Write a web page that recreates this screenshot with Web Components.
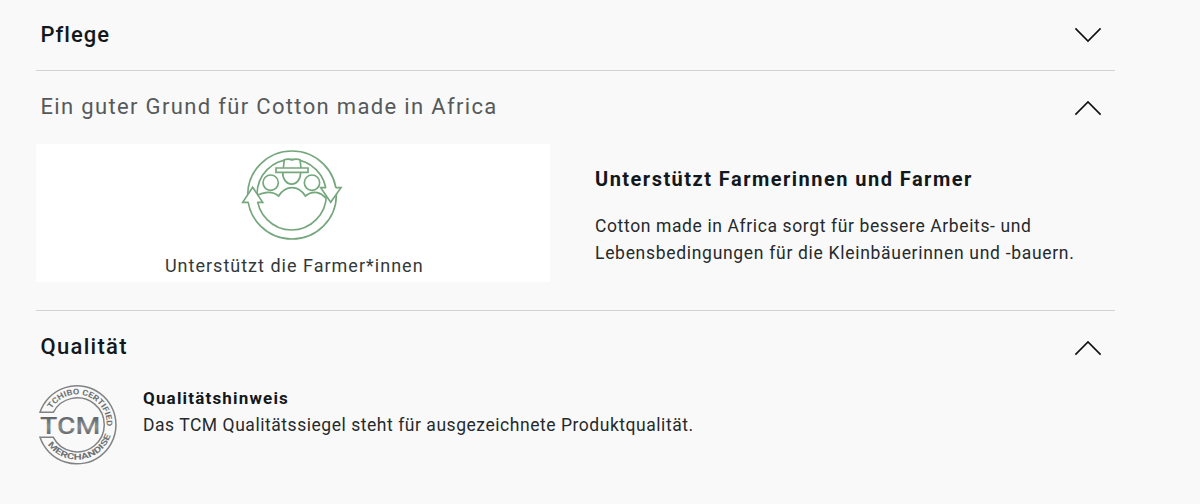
<!DOCTYPE html>
<html lang="de">
<head>
<meta charset="utf-8">
<title>Produktdetails</title>
<style>
body{margin:0;background:#f9f9f9;color:#12181b;font-family:Roboto,"Liberation Sans",sans-serif;font-variant-ligatures:none}
</style>
</head>
<body>
<product-accordion>
  <accordion-item label="Pflege" style="--h:70px;--top:20.5px;--icon:6px;--ls:1px"></accordion-item>
  <accordion-item label="Ein guter Grund für Cotton made in Africa" open style="--h:239px;--top:22px;--c:#56595b;--w:400;--ls:1.34px">
    <benefit-row>
      <farmer-card slot="media">Unterstützt die Farmer*innen</farmer-card>
      <span slot="heading">Unterstützt Farmerinnen und Farmer</span>
      <div>Cotton made in Africa sorgt für bessere Arbeits- und</div>
      <div style="letter-spacing:.7px">Lebensbedingungen für die Kleinbäuerinnen und -bauern.</div>
    </benefit-row>
  </accordion-item>
  <accordion-item label="Qualität" open last style="--h:193px;--top:22px;--ls:1.3px">
    <quality-note><span slot="heading">Qualitätshinweis</span>Das TCM Qualitätssiegel steht für ausgezeichnete Produktqualität.</quality-note>
  </accordion-item>
</product-accordion>
<script>
const define=(name,html,setup)=>customElements.define(name,class extends HTMLElement{
  constructor(){super();this.attachShadow({mode:'open'}).innerHTML=html}
  connectedCallback(){if(setup)setup(this,this.shadowRoot)}
});

define('product-accordion',`<style>:host{display:block;width:1079px;margin-left:36px}</style><slot></slot>`);

define('chevron-icon',`<style>:host{display:block;width:28px;height:16px}:host([up]) svg{transform:scaleY(-1)}svg{display:block}</style>
<svg width="28" height="16" viewBox="0 0 28 16" fill="none" stroke="#111" stroke-width="1.6"><path d="M1.4 1.4 14 14 26.6 1.4"/></svg>`);

define('accordion-item',`<style>
:host{display:block;box-sizing:content-box;height:var(--h);border-bottom:1px solid #d2d2d2}
:host([last]){border-bottom:0}
header{display:flex;justify-content:space-between;align-items:flex-start;padding:var(--top,20px) 13px 0 4.5px;height:28px}
h2{margin:0;font-size:22px;line-height:28px;font-weight:var(--w,500);color:var(--c,inherit);letter-spacing:var(--ls);white-space:nowrap}
chevron-icon{margin-top:var(--icon,7px)}
</style><header><h2></h2><chevron-icon></chevron-icon></header><slot></slot>`,(el,root)=>{
  root.querySelector('h2').textContent=el.getAttribute('label');
  root.querySelector('chevron-icon').toggleAttribute('up',el.hasAttribute('open'));
});

define('benefit-row',`<style>
:host{display:grid;grid-template-columns:513.5px 1fr;column-gap:45.5px;padding-top:23px}
.copy{padding-top:21px}
h3{margin:0 0 20px;font-size:20px;line-height:28px;font-weight:700;letter-spacing:1.47px;white-space:nowrap}
.text{font-size:17.5px;line-height:27px;letter-spacing:.62px;white-space:nowrap;color:#252a2d}
</style><slot name="media"></slot><div class="copy"><h3><slot name="heading"></slot></h3><div class="text"><slot></slot></div></div>`);

define('farmer-card',`<style>
:host{display:flex;flex-direction:column;align-items:center;height:137.5px;background:#fff}
svg{display:block;margin-top:-4px;flex:none}
p{margin:9px 0 0;padding-left:3px;font-size:18px;line-height:24px;letter-spacing:1.01px;color:#333839;white-space:nowrap}
</style>
<svg width="125" height="105" viewBox="0 0 375 315" fill="none" stroke="#75a77c" stroke-width="5">
<ellipse cx="186" cy="165" rx="133" ry="132"/><ellipse cx="185" cy="164" rx="104" ry="106"/>
<path d="M84 164Q97 159 112 157Q132 156 146 168Q162 143 186 143T226 168Q243 154 262 158Q276 161 287 174"/>
<circle cx="122" cy="128" r="23"/><circle cx="246" cy="128" r="23"/>
<path fill="#fff" d="M158 97C158 144 212 144 212 97M160 84 163 59Q175 55 186 60Q198 55 210 59L213 84"/>
<path fill="#fff" d="M138 84H234V97H138Z"/>
<path fill="#fff" d="M56 187H38L68 142 98 187H81M288 143H272L302 187 333 143H317"/>
</svg><p><slot></slot></p>`);

define('tcm-seal',`<style>:host{display:block;width:80px;height:82px}svg{display:block}text{font-family:Roboto,"Liberation Sans",sans-serif;font-weight:700;fill:#707274}</style>
<svg width="80" height="82" viewBox="27 24 240 246">
<defs><linearGradient id="g" x1="0" y1="0" x2="0" y2="1"><stop offset=".2" stop-color="#606365"/><stop offset=".55" stop-color="#8c8e8f"/><stop offset=".85" stop-color="#606365"/></linearGradient>
<path id="top" d="M64.4 102A89 89 0 0 1 229.3 157.8"/><path id="bottom" d="M53.3 208.4A107 107 0 0 0 243.9 176.5"/></defs>
<g fill="none" stroke="#808283" stroke-width="4.5">
<path d="M30 112A117 117 0 1 1 30 187H70A81 81 0 1 0 70 112Z"/></g>
<text style="font-size:24px"><textPath href="#top" textLength="238" lengthAdjust="spacingAndGlyphs">TCHIBO CERTIFIED</textPath></text>
<text style="font-size:25px"><textPath href="#bottom" textLength="236" lengthAdjust="spacingAndGlyphs">MERCHANDISE</textPath></text>
<text x="30" y="177" textLength="181" lengthAdjust="spacingAndGlyphs" style="font-size:74px;font-weight:500;fill:url(#g)">TCM</text>
</svg>`);

define('quality-note',`<style>
:host{display:flex;gap:24px;padding:22px 0 0 3px}
.copy{padding-top:2px;font-size:17.5px;line-height:27px;letter-spacing:.54px;white-space:nowrap;color:#252a2d}
h3{margin:0;font-size:17px;line-height:27px;font-weight:700;letter-spacing:1.18px;color:#12181b}
</style><tcm-seal></tcm-seal><div class="copy"><h3><slot name="heading"></slot></h3><slot></slot></div>`);
</script>
</body>
</html>
